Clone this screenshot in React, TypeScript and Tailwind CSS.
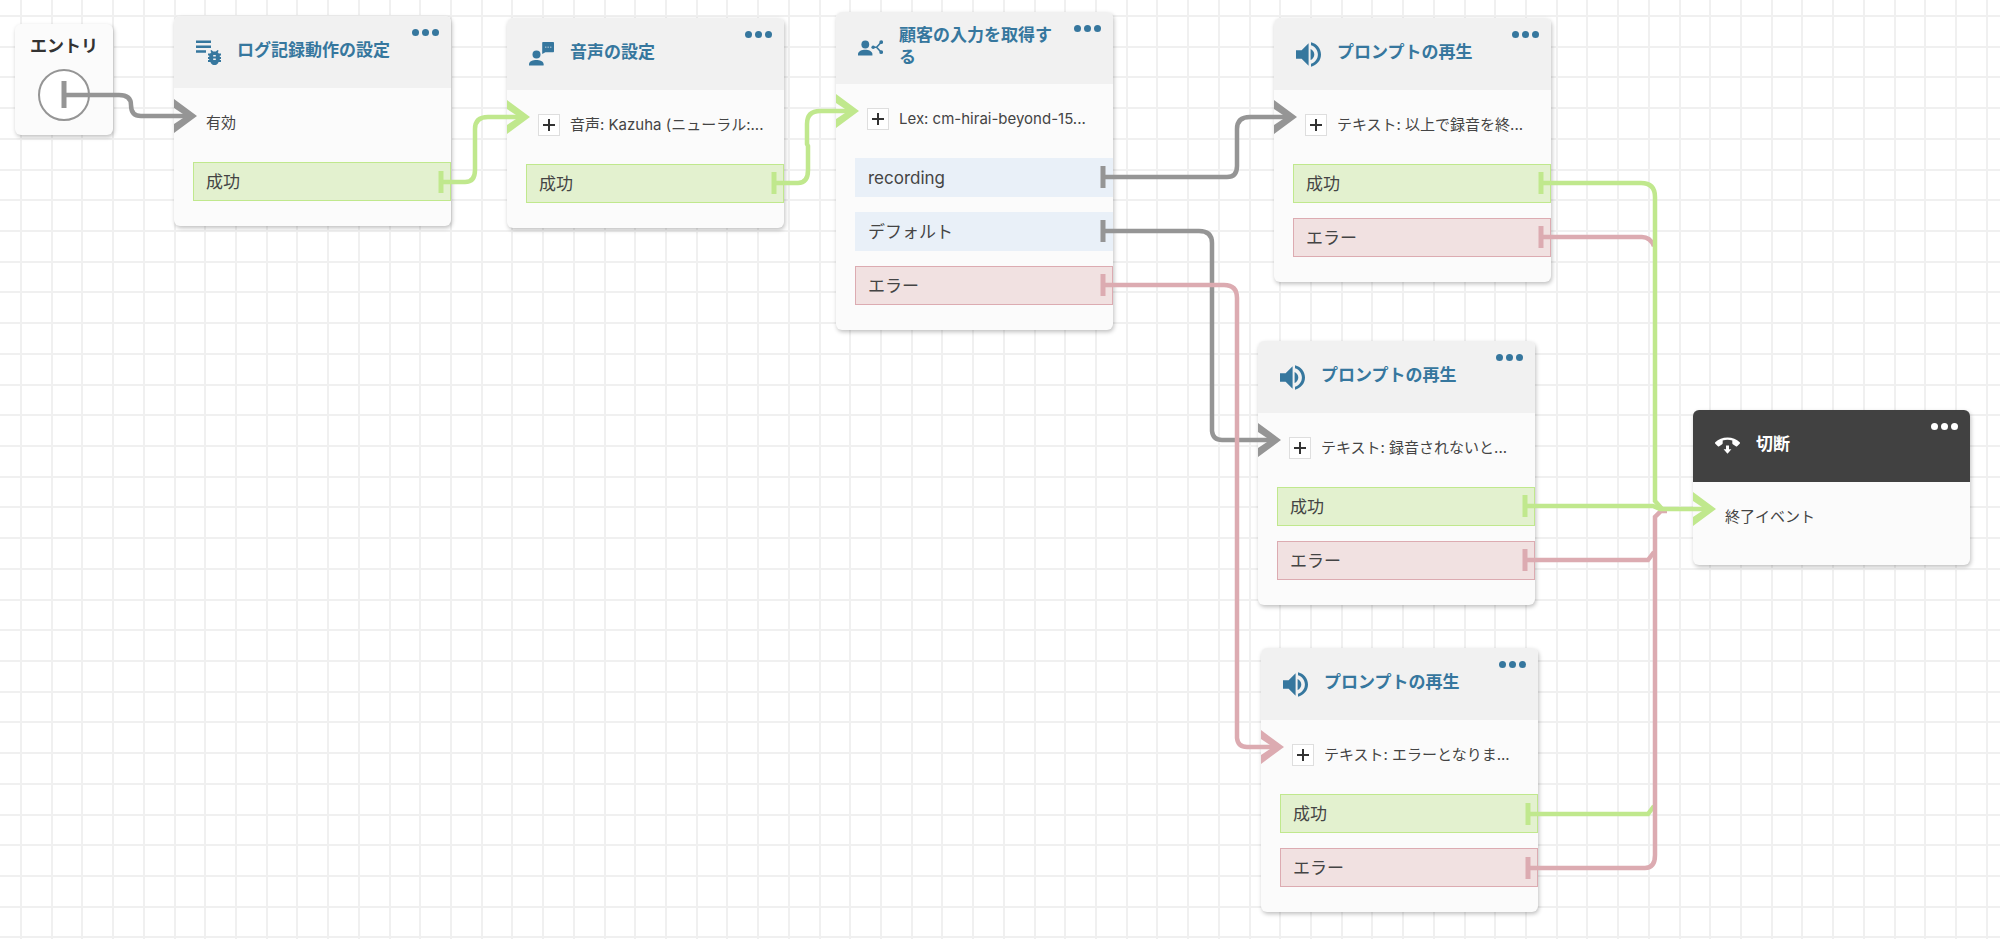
import type { ReactNode } from "react";

type Tone = "success" | "error" | "branch";
type Branch = { label: string; tone: Tone };

const toneClass: Record<Tone, string> = {
  success: "border-[#c0e88d] bg-[#e3f1cf]",
  error: "border-[#dcabb1] bg-[#f1e1e1]",
  branch: "border-[#e9f0f8] bg-[#e9f0f8]",
};

const GREEN = "#c0e88d";
const RED = "#dcabb1";
const GRAY = "#959595";

function Icon({ children }: { children: ReactNode }) {
  return (
    <svg viewBox="0 0 25 25" className="size-[25px]" fill="currentColor" aria-hidden="true">
      {children}
    </svg>
  );
}

function LogIcon() {
  return (
    <Icon>
      <path d="M0 0.500h15v2.500H0zM0 5.500h15v2.500H0zM0 10.300h10v2.500H0z" />
      <path
        fillRule="evenodd"
        d="M14.300 10.800l1.200-.9 1.600 1.500h2.800l1.600-1.500 1.200.9-1 1.500 1.100 1.300H25v1.800h-1.200v1.700H25v1.800h-1.200v1.200H25v1.800h-2.400c-.8 2.100-2.300 3.200-4.100 3.200s-3.300-1.100-4.100-3.200H12v-1.800h1.200v-1.200H12v-1.800h1.200v-1.700H12v-1.800h2.200l1.100-1.300zM17.200 15v1.500h2.600V15zM17.200 18.500V20h2.600v-1.500z"
      />
    </Icon>
  );
}

function VoiceIcon() {
  return (
    <Icon>
      <circle cx="7.500" cy="12.500" r="4" />
      <path d="M0 23.500v-1.300c0-2.900 4-4.200 7.300-4.200s7.300 1.300 7.300 4.200v1.300z" />
      <path
        fillRule="evenodd"
        d="M14.200 0h9.800c.6 0 1 .4 1 1v8.300c0 .6-.4 1-1 1h-7.600L13.200 12V1c0-.6.4-1 1-1zM16 4.700v.9h1.400V4.700zM18.500 4.700v.9h1.400V4.700zM21 4.700v.9h1.400V4.700z"
      />
    </Icon>
  );
}

function InputIcon() {
  return (
    <Icon>
      <circle cx="7.300" cy="8.500" r="3.900" />
      <path d="M0 19.500v-1.400c0-2.800 4-4.300 7.200-4.300s7.200 1.500 7.200 4.300v1.400z" />
      <circle cx="15.200" cy="11.300" r="1.800" />
      <circle cx="23.200" cy="6.200" r="1.900" />
      <circle cx="23.200" cy="16.200" r="1.900" />
      <path d="M15.200 11.300h4M23.200 6.200l-4.600 5.100 4.600 4.900" fill="none" stroke="currentColor" strokeWidth="1.600" />
    </Icon>
  );
}

function SpeakerIcon() {
  return (
    <Icon>
      <path d="M0 8.300v8.400h5.600l7 7V1.300l-7 7zM14.600 6.900v11.200c2.200-1 3.700-3.100 3.700-5.600s-1.500-4.600-3.700-5.600z" />
      <path d="M15 .3v2.900c4 1.200 6.900 4.900 6.900 9.300s-2.900 8.100-6.900 9.300v2.900C20.600 23.400 25 18.500 25 12.500S20.600 1.600 15 .3z" />
    </Icon>
  );
}

function HangUpIcon() {
  return (
    <Icon>
      <path d="M12.500 3.500C7.700 3.500 3.300 5.400.3 8.300c-.4.400-.4 1 0 1.400l2.600 2.500c.4.400.9.400 1.300.1l3-2.100c.3-.2.500-.5.500-.9V6.600c3-1 6.600-1 9.600 0v2.700c0 .4.200.7.500.9l3 2.100c.4.300.9.300 1.300-.1l2.600-2.500c.4-.4.400-1 0-1.400-3-2.900-7.400-4.800-12.200-4.800z" />
      <path d="M11 11.500h3v3.800h2.400l-3.900 4.400-3.900-4.400H11z" />
    </Icon>
  );
}

type CardProps = {
  place: string;
  icon: ReactNode;
  title: string;
  detail: string;
  expandable?: boolean;
  dark?: boolean;
  branches?: Branch[];
};

function Card({ place, icon, title, detail, expandable, dark, branches = [] }: CardProps) {
  return (
    <section
      className={`absolute w-[277px] rounded-md bg-[#fbfbfb] shadow-[1px_2px_4px_rgba(0,0,0,0.25)] ${place}`}
    >
      <header
        className={`flex h-[72px] items-start rounded-t-md pr-3 pl-[22px] ${
          dark ? "bg-[#414141] text-white" : "bg-[#f1f1f1] text-[#36779e]"
        }`}
      >
        <div className="mt-6 w-[41px] shrink-0">{icon}</div>
        <div className="flex h-[68px] flex-1 items-center">
          <h2 className="w-40 text-[17px] leading-[22px] font-bold">{title}</h2>
        </div>
        <button type="button" aria-label="メニュー" className="-ml-8 flex gap-[3px] pt-[13px]">
          <span className="size-[7px] rounded-full bg-current" />
          <span className="size-[7px] rounded-full bg-current" />
          <span className="size-[7px] rounded-full bg-current" />
        </button>
      </header>
      <div className="flex h-[74px] items-center pr-5 pb-1 pl-8 text-[15px] leading-[22px]">
        {expandable && (
          <button
            type="button"
            aria-label="展開"
            className="mr-[10px] -ml-px flex size-[22px] shrink-0 items-center justify-center border border-[#dedede] bg-white text-[#333]"
          >
            <svg viewBox="0 0 12 12" className="size-3" stroke="currentColor" strokeWidth="2" aria-hidden="true">
              <path d="M6 0v12M0 6h12" />
            </svg>
          </button>
        )}
        <p className="whitespace-nowrap">{detail}</p>
      </div>
      {branches.length > 0 ? (
        <ul className="flex flex-col gap-[15px] pb-[25px] pl-[19px]">
          {branches.map((b) => (
            <li
              key={b.label}
              className={`flex h-[39px] items-center border pl-3 text-[17px] leading-[22px] ${toneClass[b.tone]}`}
            >
              {b.label}
            </li>
          ))}
        </ul>
      ) : (
        <div className="h-[9px]" />
      )}
    </section>
  );
}

const success: Branch = { label: "成功", tone: "success" };
const failure: Branch = { label: "エラー", tone: "error" };

const cards: CardProps[] = [
  {
    place: "left-[174px] top-[16px]",
    icon: <LogIcon />,
    title: "ログ記録動作の設定",
    detail: "有効",
    branches: [success],
  },
  {
    place: "left-[507px] top-[18px]",
    icon: <VoiceIcon />,
    title: "音声の設定",
    detail: "音声: Kazuha (ニューラル:...",
    expandable: true,
    branches: [success],
  },
  {
    place: "left-[836px] top-[12px]",
    icon: <InputIcon />,
    title: "顧客の入力を取得する",
    detail: "Lex: cm-hirai-beyond-15...",
    expandable: true,
    branches: [{ label: "recording", tone: "branch" }, { label: "デフォルト", tone: "branch" }, failure],
  },
  {
    place: "left-[1274px] top-[18px]",
    icon: <SpeakerIcon />,
    title: "プロンプトの再生",
    detail: "テキスト: 以上で録音を終...",
    expandable: true,
    branches: [success, failure],
  },
  {
    place: "left-[1258px] top-[341px]",
    icon: <SpeakerIcon />,
    title: "プロンプトの再生",
    detail: "テキスト: 録音されないと...",
    expandable: true,
    branches: [success, failure],
  },
  {
    place: "left-[1261px] top-[648px]",
    icon: <SpeakerIcon />,
    title: "プロンプトの再生",
    detail: "テキスト: エラーとなりま...",
    expandable: true,
    branches: [success, failure],
  },
  {
    place: "left-[1693px] top-[410px]",
    icon: <HangUpIcon />,
    title: "切断",
    detail: "終了イベント",
    dark: true,
  },
];

const links: { color: string; d: string }[] = [
  { color: GRAY, d: "M64 95H119Q131 95 131 105Q131 116 141 116H190" },
  { color: GREEN, d: "M441 182H465Q475 182 475 170V129Q475 117 488 117H523" },
  { color: GREEN, d: "M774 183H798Q808 183 808 170V146L807 144V124Q807 111 820 111H852" },
  { color: GRAY, d: "M1103 177H1227Q1237 177 1237 166V129Q1237 117 1250 117H1290" },
  { color: GRAY, d: "M1103 231H1199Q1212 231 1212 243V431Q1213 440 1222 440H1274" },
  { color: RED, d: "M1103 285H1224Q1237 285 1237 298V738Q1238 747 1247 747H1277" },
  { color: GREEN, d: "M1528 814H1648L1654 806" },
  { color: RED, d: "M1541 237H1642Q1650 237 1654 246" },
  { color: RED, d: "M1525 560H1648L1654 552" },
  { color: RED, d: "M1528 868H1645Q1655 868 1655 855V517L1661 511H1667" },
  { color: GREEN, d: "M1525 506H1653L1660 509H1709" },
  { color: GREEN, d: "M1541 183H1641Q1655 183 1655 197V501L1662 509" },
];

const ports: { x: number; y: number; color: string }[] = [
  { x: 441, y: 182, color: GREEN },
  { x: 774, y: 183, color: GREEN },
  { x: 1103, y: 177, color: GRAY },
  { x: 1103, y: 231, color: GRAY },
  { x: 1103, y: 285, color: RED },
  { x: 1541, y: 183, color: GREEN },
  { x: 1541, y: 237, color: RED },
  { x: 1525, y: 506, color: GREEN },
  { x: 1525, y: 560, color: RED },
  { x: 1528, y: 814, color: GREEN },
  { x: 1528, y: 868, color: RED },
];

const arrows: { x: number; y: number; color: string }[] = [
  { x: 174, y: 116, color: GRAY },
  { x: 507, y: 117, color: GREEN },
  { x: 836, y: 111, color: GREEN },
  { x: 1274, y: 117, color: GRAY },
  { x: 1258, y: 440, color: GRAY },
  { x: 1261, y: 747, color: RED },
  { x: 1693, y: 509, color: GREEN },
];

function Grid() {
  return (
    <svg className="absolute inset-0 size-full" aria-hidden="true">
      <defs>
        <pattern id="grid" x="20" y="15" width="215" height="215" patternUnits="userSpaceOnUse">
          <path
            d="M1 0V215M32 0V215M62 0V215M93 0V215M124 0V215M155 0V215M185 0V215M0 1H215M0 32H215M0 62H215M0 93H215M0 124H215M0 155H215M0 185H215"
            stroke="#f0f0f0"
            strokeWidth="2"
          />
        </pattern>
      </defs>
      <rect width="100%" height="100%" fill="url(#grid)" />
    </svg>
  );
}

function Links() {
  return (
    <svg className="pointer-events-none absolute inset-0 size-full overflow-visible" aria-hidden="true">
      {links.map((l) => (
        <path key={l.d} d={l.d} fill="none" stroke={l.color} strokeWidth="4.500" />
      ))}
      <path d="M64 81V108" stroke={GRAY} strokeWidth="5" />
      {ports.map((p) => (
        <path key={`${p.x}-${p.y}`} d={`M${p.x} ${p.y - 11}v22`} stroke={p.color} strokeWidth="5" />
      ))}
      {arrows.map((a) => (
        <path key={`${a.x}-${a.y}`} d={`M${a.x} ${a.y - 17}l23 17l-23 17v-9l9-6v-4l-9-6z`} fill={a.color} />
      ))}
    </svg>
  );
}

export default function App() {
  return (
    <main className="relative min-h-screen w-full overflow-hidden bg-white font-[Inter,'Noto_Sans_CJK_JP',sans-serif] text-[#444]">
      <Grid />
      <section className="absolute top-[24px] left-[15px] flex w-[98px] flex-col items-center gap-3 rounded-md bg-[#fbfbfb] pt-[11px] pb-[14px] shadow-[1px_2px_4px_rgba(0,0,0,0.25)]">
        <h2 className="text-[17px] leading-[22px] font-bold text-[#333]">エントリ</h2>
        <div className="size-[52px] rounded-full border-2 border-[#959595] bg-white" />
      </section>
      {cards.map((c) => (
        <Card key={c.place} {...c} />
      ))}
      <Links />
    </main>
  );
}
